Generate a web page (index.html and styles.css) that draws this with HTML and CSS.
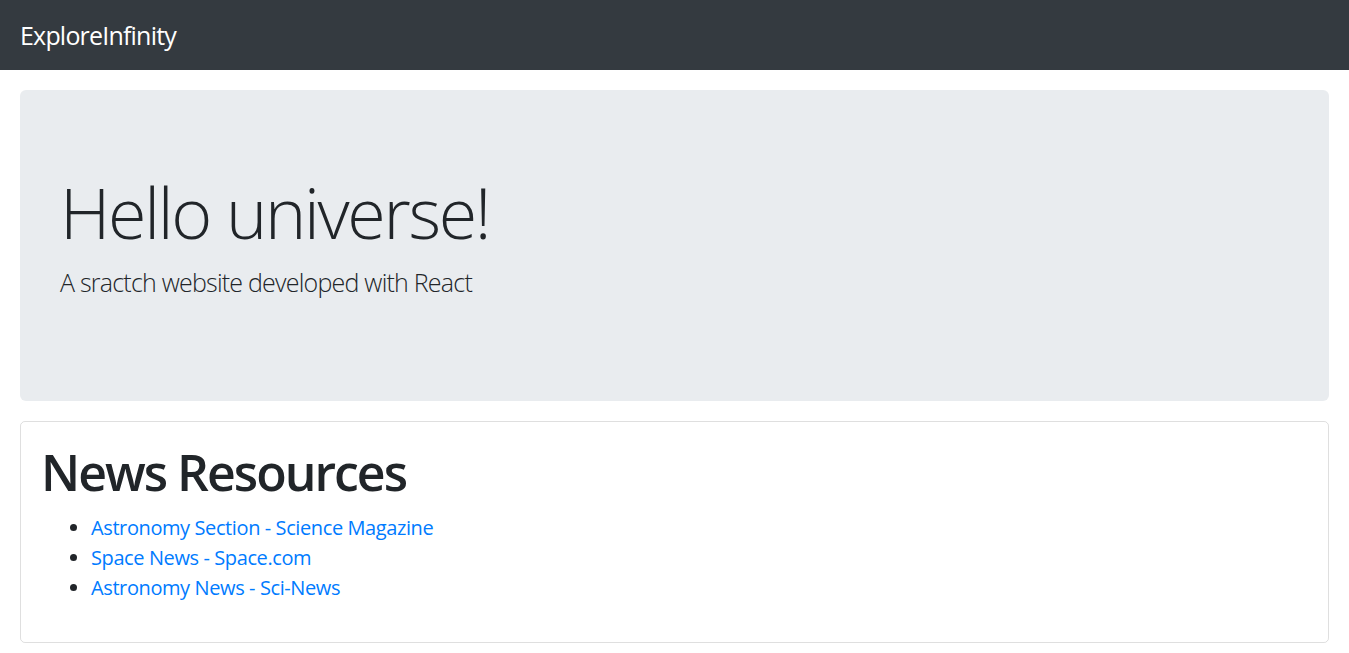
FILE: index.html
```html
<!DOCTYPE html>
<html lang="en">
<head>
<meta charset="utf-8">
<title>ExploreInfinity</title>
<link rel="stylesheet" href="styles.css">
</head>
<body>
<nav class="navbar">
  <a class="brand" href="#">ExploreInfinity</a>
</nav>
<main class="page">
  <section class="jumbotron">
    <h1 class="display">Hello universe!</h1>
    <p class="lead">A sractch website developed with React</p>
  </section>
  <section class="card">
    <h1 class="card-title">News Resources</h1>
    <ul class="links">
      <li><a href="#">Astronomy Section - Science Magazine</a></li>
      <li><a href="#">Space News - Space.com</a></li>
      <li><a href="#">Astronomy News - Sci-News</a></li>
    </ul>
  </section>
</main>
</body>
</html>
```

FILE: styles.css
```css
* { box-sizing: border-box; }
html, body { margin: 0; padding: 0; }
body {
  font-family: "Open Sans", "Noto Sans", "Liberation Sans", sans-serif;
  font-size: 20px;
  line-height: 1.5;
  color: #212529;
  background: #fff;
}
.navbar {
  background: #343a40;
  padding: 11px 20px 9px;
  display: flex;
  align-items: center;
}
.brand {
  color: #fff;
  text-decoration: none;
  font-size: 25px;
  line-height: 37.5px;
  padding: 6.25px 0;
  letter-spacing: -0.8px;
}
.page {
  padding: 20px;
  display: flex;
  flex-direction: column;
  gap: 20px;
}
.jumbotron {
  background: #e9ecef;
  border-radius: 6px;
  padding: 80px 40px 79px;
}
.display {
  margin: 0 0 10px;
  font-size: 70px;
  font-weight: 300;
  line-height: 1.2;
  letter-spacing: -2.3px;
}
.lead {
  margin: 0;
  font-size: 25px;
  font-weight: 300;
  line-height: 1.5;
  padding-bottom: 20px;
  letter-spacing: -0.78px;
}
.card {
  border: 1px solid rgba(0,0,0,.125);
  border-radius: 5px;
  padding: 20px;
}
.card-title {
  margin: 0 0 11px;
  font-size: 50px;
  font-weight: 600;
  line-height: 1.2;
  letter-spacing: -2px;
}
.links {
  margin: 0 0 19px;
  padding-left: 50px;
}
.links a {
  color: #007bff;
  text-decoration: none;
  letter-spacing: -0.4px;
}
```
